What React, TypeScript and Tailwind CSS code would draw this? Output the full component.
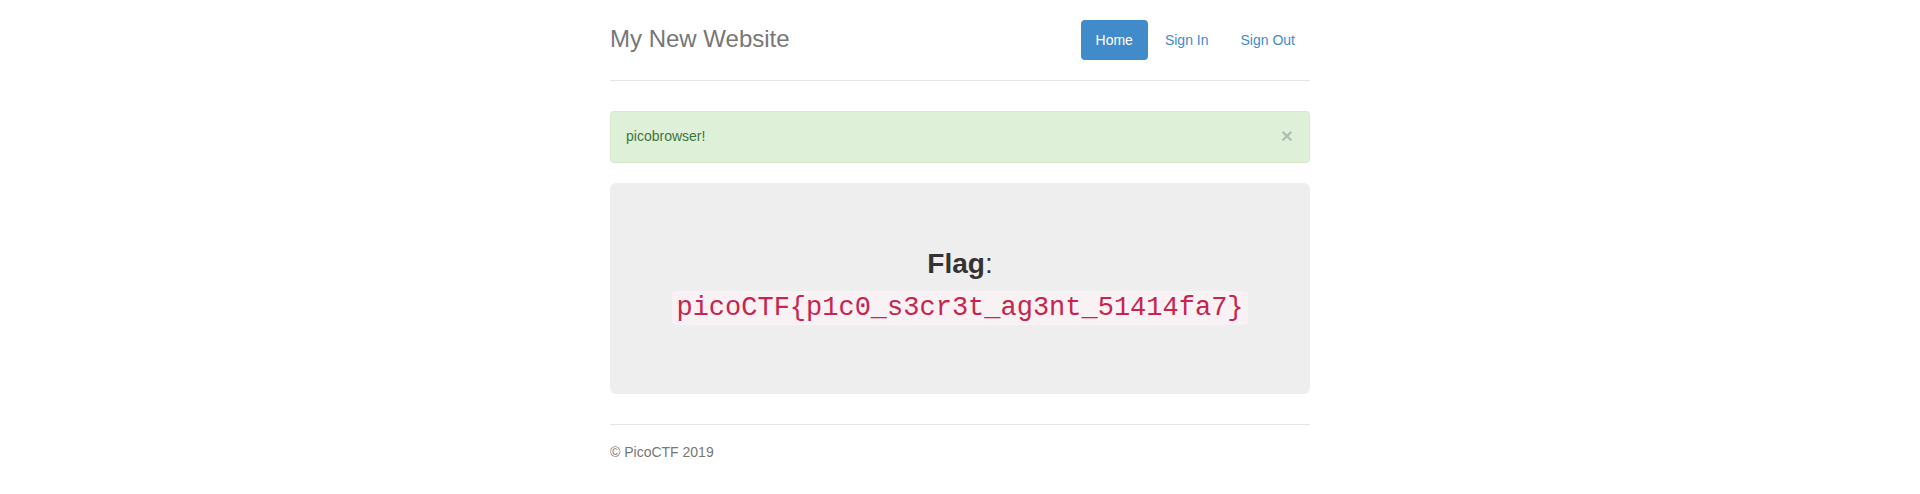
export default function App() {
  const navItems = [
    { label: "Home", active: true },
    { label: "Sign In", active: false },
    { label: "Sign Out", active: false },
  ];

  return (
    <div
      className="min-h-screen bg-white pt-5 text-[14px] leading-[20px] text-[#333]"
      style={{ fontFamily: '"Liberation Sans", Arial, sans-serif' }}
    >
      <div className="mx-auto w-[700px]">
        {/* header */}
        <div className="mb-[30px] flex items-start justify-between border-b border-[#e5e5e5] pb-5">
          <h3 className="m-0 -mt-px text-[24px] leading-[40px] font-normal text-[#777]">
            My New Website
          </h3>
          <ul className="flex gap-[2px]">
            {navItems.map((item) => (
              <li key={item.label}>
                <a
                  href="#"
                  className={`block rounded-[4px] px-[15px] py-[10px] ${
                    item.active ? "bg-[#428bca] text-white" : "text-[#428bca]"
                  }`}
                >
                  {item.label}
                </a>
              </li>
            ))}
          </ul>
        </div>

        {/* alert */}
        <div className="mb-5 flex h-[52px] items-center justify-between rounded-[4px] border border-[#d6e9c6] bg-[#dff0d8] px-[15px] pb-[2px] text-[#3c763d]">
          <span>picobrowser!</span>
          <span className="mr-[1px] h-5 text-[21px] leading-[20px] font-bold text-black opacity-20 [text-shadow:0_1px_0_#fff]">
            ×
          </span>
        </div>

        {/* jumbotron */}
        <div className="mb-[30px] rounded-[6px] bg-[#eeeeee] px-[60px] py-12 text-center">
          <div className="pt-[10px] pb-[13px]">
            <div className="text-[28px] leading-[45px] text-[#333]">
              <b className="font-bold">Flag</b>:
            </div>
            <div className="leading-[45px]">
              <code
                className="rounded-[4px] bg-[#f9f2f4] px-[4px] py-[2px] text-[27px] text-[#c7254e]"
                style={{ fontFamily: '"Liberation Mono", "Courier New", monospace' }}
              >
                picoCTF{"{"}p1c0_s3cr3t_ag3nt_51414fa7{"}"}
              </code>
            </div>
          </div>
        </div>

        {/* footer */}
        <div className="border-t border-[#e5e5e5] pt-[17px] text-[#777]">
          <p className="mb-[10px]">© PicoCTF 2019</p>
        </div>
      </div>
    </div>
  );
}
